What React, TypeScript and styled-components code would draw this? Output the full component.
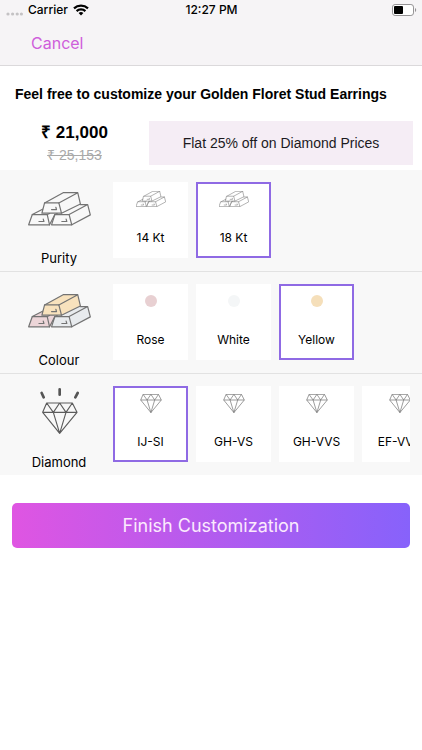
import React, { useState } from "react";
import styled, { createGlobalStyle } from "styled-components";

const GlobalStyle = createGlobalStyle`
  *, *::before, *::after { box-sizing: border-box; }
  body {
    margin: 0;
    background: #fff;
    color: #000;
    font-family: Inter, "Liberation Sans", sans-serif;
  }
`;

const ACCENT = "#8f6ae4";

const TopBar = styled.header`
  background: #f6f4f6;
  border-bottom: 1px solid #dbd9db;
`;

const StatusBar = styled.div`
  display: grid;
  grid-template-columns: 1fr auto 1fr;
  align-items: center;
  height: 20px;
  padding: 0 5px 0 6px;
  font-size: 12px;
  font-weight: 500;
  line-height: 20px;
`;

const Carrier = styled.div`
  display: flex;
  align-items: center;
  gap: 5px;
`;

const BatterySlot = styled.div`
  display: flex;
  justify-content: flex-end;
`;

const NavBar = styled.nav`
  display: flex;
  align-items: center;
  height: 45px;
  padding: 0 31px;
`;

const CancelButton = styled.button`
  border: 0;
  padding: 0;
  background: none;
  color: #cf5edb;
  font: 400 16px/20px Inter, sans-serif;
  cursor: pointer;
`;

const Title = styled.h1`
  margin: 0;
  padding: 18px 15px 17px;
  font: 700 14px/20px "Liberation Sans", Arial, sans-serif;
`;

const Summary = styled.section`
  display: flex;
  align-items: stretch;
  padding: 0 9px 5px 0;
  font-family: "Liberation Sans", Arial, sans-serif;
`;

const Prices = styled.div`
  flex: 0 0 149px;
  text-align: center;
`;

const Price = styled.div`
  font-size: 17px;
  font-weight: 700;
  line-height: 24px;
`;

const OldPrice = styled.del`
  display: block;
  color: #a9a9a9;
  font-size: 14px;
  line-height: 20px;
`;

const Offer = styled.div`
  display: flex;
  flex: 1;
  align-items: center;
  justify-content: center;
  min-height: 44px;
  background: #f5edf5;
  color: #1c1a1e;
  font-size: 14px;
`;

const OptionRow = styled.fieldset`
  display: flex;
  min-width: 0;
  margin: 0;
  padding: 12px 12px 13px 5px;
  border: 0;
  background: #f8f8f8;

  & + & {
    border-top: 1px solid #e2e2e2;
  }
`;

const RowHead = styled.div`
  display: flex;
  flex: 0 0 108px;
  flex-direction: column;
  align-items: center;
  justify-content: space-between;
  height: 86px;
  margin-bottom: -10px;
`;

const RowIcon = styled.div`
  display: flex;
  align-items: center;
  justify-content: center;
  height: 54px;
`;

const RowLabel = styled.span`
  font-size: 13px;
  line-height: 20px;
`;

const Choices = styled.div`
  display: flex;
  flex: 1;
  gap: 8px;
  min-width: 0;
  overflow-x: auto;
  scrollbar-width: none;
`;

const Choice = styled.label`
  position: relative;
  display: flex;
  flex: 0 0 75px;
  flex-direction: column;
  align-items: center;
  height: 76px;
  padding: 5px 0 10px;
  border: 2px solid #fff;
  background: #fff;
  cursor: pointer;

  &:has(input:checked) {
    border-color: ${ACCENT};
  }
`;

const Radio = styled.input`
  position: absolute;
  inset: 0;
  margin: 0;
  opacity: 0;
  cursor: pointer;
`;

const ChoiceIcon = styled.span`
  display: flex;
  align-items: center;
  justify-content: center;
  height: 20px;
`;

const ChoiceText = styled.span`
  margin-top: auto;
  font-size: 12px;
  line-height: 16px;
  white-space: nowrap;
`;

const Swatch = styled.span<{ $color: string }>`
  width: 12px;
  height: 12px;
  border-radius: 50%;
  background: ${(p) => p.$color};
`;

const Footer = styled.footer`
  padding: 28px 12px;
`;

const FinishButton = styled.button`
  display: block;
  width: 100%;
  height: 45px;
  border: 0;
  border-radius: 5px;
  background: linear-gradient(90deg, #df55e2, #8762fb);
  color: #fbeafd;
  font: 400 18px/24px Inter, sans-serif;
  cursor: pointer;
`;

const WifiIcon = () => (
  <svg width="16" height="12" viewBox="0 0 16 12" aria-hidden="true">
    <g fill="none" stroke="#000" strokeWidth="2.2">
      <path d="M1 4.4a10.2 10.2 0 0 1 14 0" />
      <path d="M3.6 7.1a6.4 6.4 0 0 1 8.8 0" />
    </g>
    <path d="M8 11.6 5.6 9.1a3.5 3.5 0 0 1 4.8 0Z" />
  </svg>
);

const SignalDots = () => (
  <svg width="17" height="12" viewBox="0 0 17 12" aria-hidden="true">
    {[2, 6.6, 11.2, 15.4].map((x) => (
      <circle key={x} cx={x} cy="10" r="1.6" fill="#c4c2c4" />
    ))}
  </svg>
);

const BatteryIcon = () => (
  <svg width="25" height="12" viewBox="0 0 25 12" aria-hidden="true">
    <rect x="0.5" y="0.5" width="21" height="11" rx="2.6" fill="#fff" stroke="#959395" />
    <rect x="2" y="2" width="9" height="8" rx="1" />
    <path d="M23 4v4c1.6-.6 1.6-3.4 0-4Z" fill="#959395" />
  </svg>
);

type BarsProps = { width: number; stroke: number; color: string; fills?: string[] };

const GoldBars = ({ width, stroke, color, fills = ["none", "none", "none"] }: BarsProps) => (
  <svg width={width} viewBox="82 65 190 101" aria-hidden="true">
    <g stroke={color} strokeWidth={stroke} strokeLinejoin="round" strokeLinecap="round" fill="none">
      <path d="M95 133 126 116 124 129H165L163 133 150 164H84Z" fill={fills[0]} stroke="none" />
      <path d="M163 133 183 129 240 101 262 103 270 134 214 164H153Z" fill={fills[2]} stroke="none" />
      <path d="M132 98 188 67H232L240 101 183 129H124Z" fill={fills[1]} stroke="none" />
      <path d="M95 133H140L147 164H84Z" />
      <path d="M95 133 126 117M140 133 147 130M147 164 163 133" />
      <path d="M163 133H206L214 164H153Z" />
      <path d="M240 103H262L206 133M262 103 270 134 214 164M163 133 170 130" />
      <path d="M132 98H175L183 129H124Z" />
      <path d="M132 98 188 67H232L175 98M232 67 240 101 183 129" />
      <path d="M153 118H168L166 111M115 154H130L128 147M184 154H199L197 147" />
    </g>
  </svg>
);

const GEM_PATH =
  "M140 84H217L231 112 179 175 128 112ZM128 112H231M140 84 160 112 179 84 198 112 217 84M160 112 179 175 198 112";

const ShiningDiamond = () => (
  <svg width="39" height="52" viewBox="120 36 117 156" aria-hidden="true">
    <path d={GEM_PATH} fill="none" stroke="#5c5c5c" strokeWidth="3.4" strokeLinejoin="round" />
    <path
      d="M179 43V59M125 54 131 67M233 54 226 67"
      stroke="#555"
      strokeWidth="8"
      strokeLinecap="round"
    />
  </svg>
);

const SmallDiamond = () => (
  <svg width="22" height="19" viewBox="126 82 107 95" aria-hidden="true">
    <path d={GEM_PATH} fill="none" stroke="#777" strokeWidth="3.6" strokeLinejoin="round" />
  </svg>
);

const SmallBars = () => <GoldBars width={30} stroke={4} color="#888" />;

type Option = { label: string; icon: React.ReactNode };
type Group = { name: string; icon: React.ReactNode; initial: string; options: Option[] };

const groups: Group[] = [
  {
    name: "Purity",
    icon: <GoldBars width={63} stroke={3.6} color="#737373" />,
    initial: "18 Kt",
    options: ["14 Kt", "18 Kt"].map((label) => ({ label, icon: <SmallBars /> })),
  },
  {
    name: "Colour",
    icon: (
      <GoldBars width={63} stroke={3.6} color="#737373" fills={["#ecd5d8", "#f8e2bd", "#e8ebee"]} />
    ),
    initial: "Yellow",
    options: [
      { label: "Rose", icon: <Swatch $color="#e8d0d2" /> },
      { label: "White", icon: <Swatch $color="#f4f6f7" /> },
      { label: "Yellow", icon: <Swatch $color="#f5dfba" /> },
    ],
  },
  {
    name: "Diamond",
    icon: <ShiningDiamond />,
    initial: "IJ-SI",
    options: ["IJ-SI", "GH-VS", "GH-VVS", "EF-VVS"].map((label) => ({
      label,
      icon: <SmallDiamond />,
    })),
  },
];

const OptionGroup = ({ group }: { group: Group }) => {
  const [selected, setSelected] = useState(group.initial);
  return (
    <OptionRow aria-labelledby={`label-${group.name}`}>
      <RowHead>
        <RowIcon>{group.icon}</RowIcon>
        <RowLabel id={`label-${group.name}`}>{group.name}</RowLabel>
      </RowHead>
      <Choices>
        {group.options.map(({ label, icon }) => (
          <Choice key={label}>
            <Radio
              type="radio"
              name={group.name}
              value={label}
              checked={selected === label}
              onChange={() => setSelected(label)}
            />
            <ChoiceIcon>{icon}</ChoiceIcon>
            <ChoiceText>{label}</ChoiceText>
          </Choice>
        ))}
      </Choices>
    </OptionRow>
  );
};

export default function App() {
  return (
    <>
      <GlobalStyle />
      <TopBar>
        <StatusBar>
          <Carrier>
            <SignalDots />
            <span>Carrier</span>
            <WifiIcon />
          </Carrier>
          <span>12:27 PM</span>
          <BatterySlot>
            <BatteryIcon />
          </BatterySlot>
        </StatusBar>
        <NavBar>
          <CancelButton type="button">Cancel</CancelButton>
        </NavBar>
      </TopBar>
      <main>
        <Title>Feel free to customize your Golden Floret Stud Earrings</Title>
        <Summary>
          <Prices>
            <Price>₹ 21,000</Price>
            <OldPrice>₹ 25,153</OldPrice>
          </Prices>
          <Offer>Flat 25% off on Diamond Prices</Offer>
        </Summary>
        {groups.map((group) => (
          <OptionGroup key={group.name} group={group} />
        ))}
      </main>
      <Footer>
        <FinishButton type="button">Finish Customization</FinishButton>
      </Footer>
    </>
  );
}
